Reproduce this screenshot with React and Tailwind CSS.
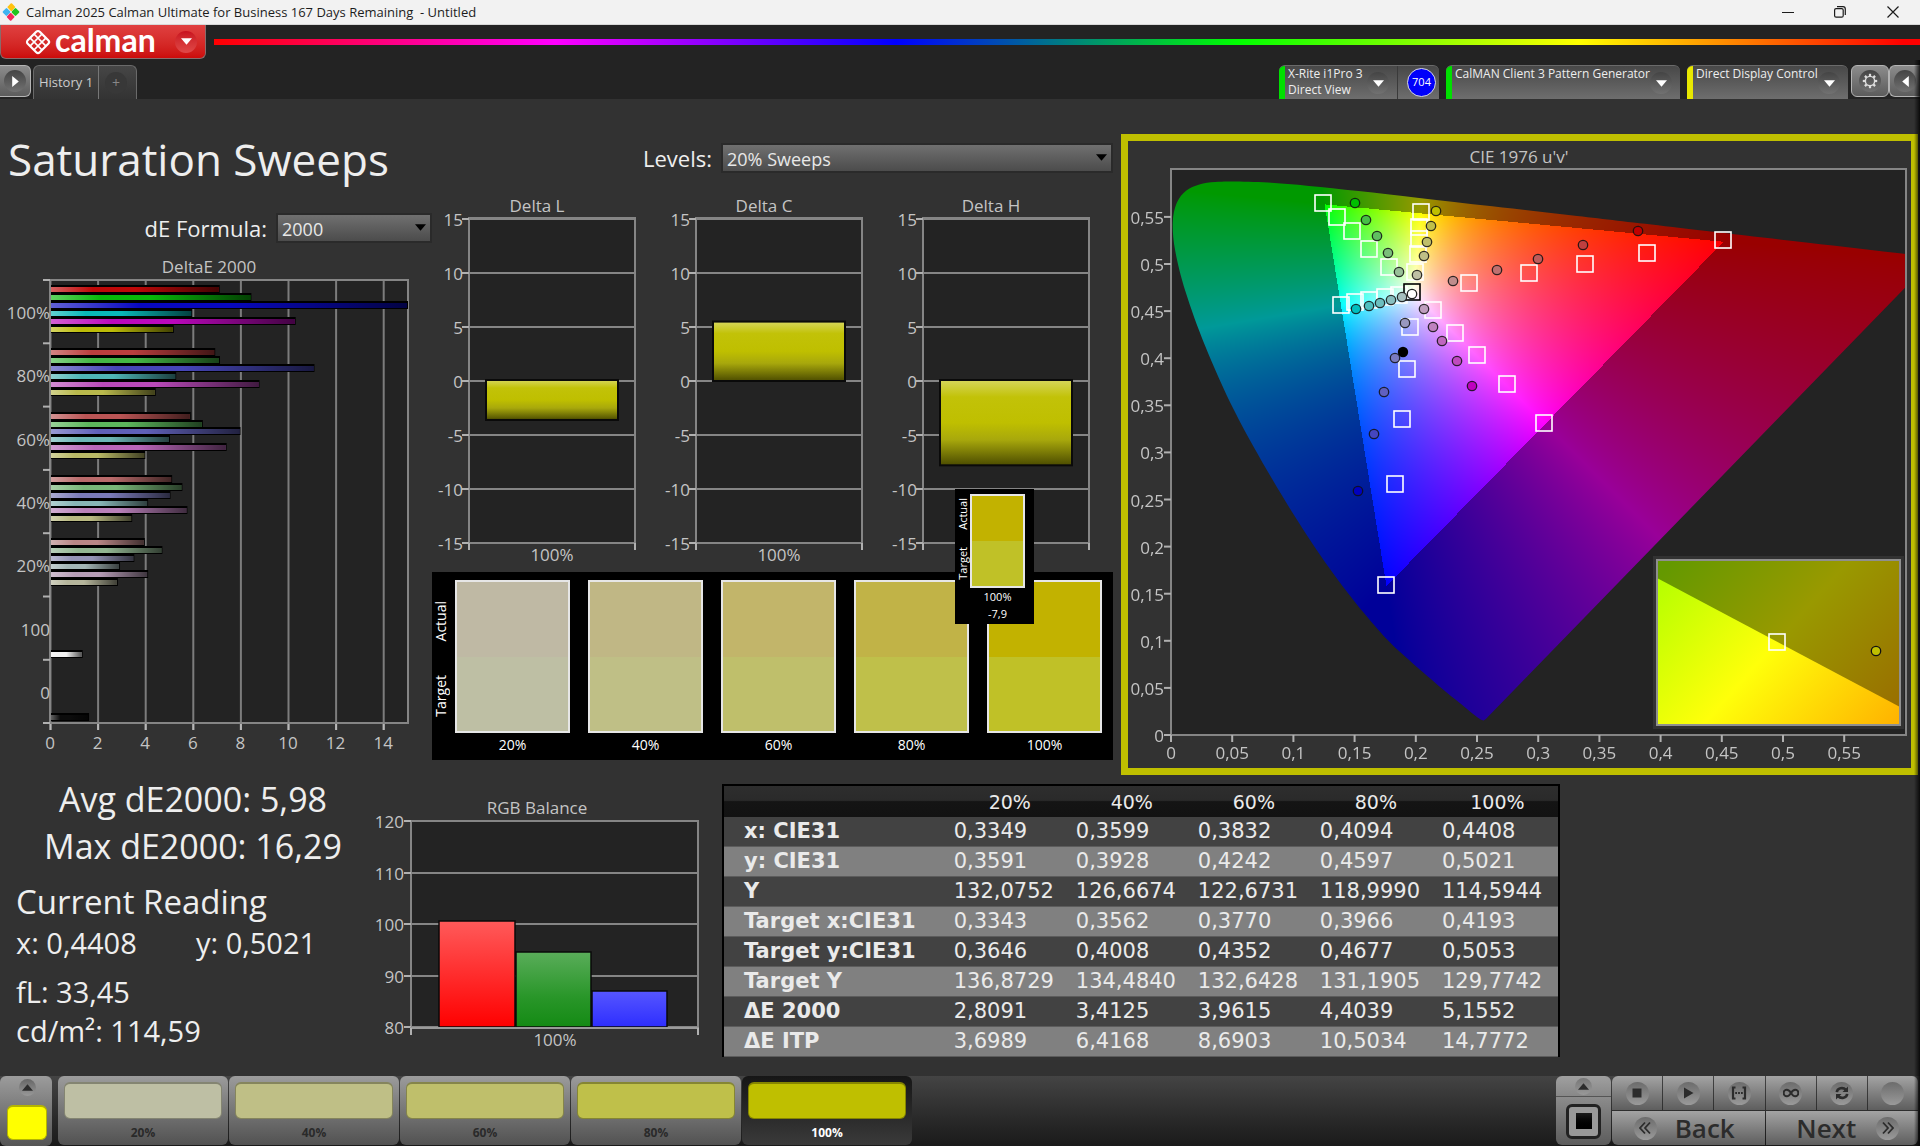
import React, { useEffect, useRef } from "react";

const LEVELS = ["20%", "40%", "60%", "80%", "100%"];

const SWATCHES = [
  { label: "20%", actual: "#bfb9a4", target: "#bebfa4" },
  { label: "40%", actual: "#c0b785", target: "#bfbf86" },
  { label: "60%", actual: "#c2b56a", target: "#bfbf6b" },
  { label: "80%", actual: "#c1b347", target: "#bfc04a" },
  { label: "100%", actual: "#c2b200", target: "#c0c127" },
];

const TABS = [
  { label: "20%", color: "#bebfa4" },
  { label: "40%", color: "#bfbf86" },
  { label: "60%", color: "#bfbf6b" },
  { label: "80%", color: "#bfc04a" },
  { label: "100%", color: "#bfbf00" },
];

const TABLE_ROWS = [
  ["x: CIE31", "0,3349", "0,3599", "0,3832", "0,4094", "0,4408"],
  ["y: CIE31", "0,3591", "0,3928", "0,4242", "0,4597", "0,5021"],
  ["Y", "132,0752", "126,6674", "122,6731", "118,9990", "114,5944"],
  ["Target x:CIE31", "0,3343", "0,3562", "0,3770", "0,3966", "0,4193"],
  ["Target y:CIE31", "0,3646", "0,4008", "0,4352", "0,4677", "0,5053"],
  ["Target Y", "136,8729", "134,4840", "132,6428", "131,1905", "129,7742"],
  ["ΔE 2000", "2,8091", "3,4125", "3,9615", "4,4039", "5,1552"],
  ["ΔE ITP", "3,6989", "6,4168", "8,6903", "10,5034", "14,7772"],
];

// one group per saturation level: red, green, blue, cyan, magenta, yellow
const DELTA_E = [
  { label: "100%", colors: ["#bf0808", "#08b808", "#0808bf", "#08b8b8", "#bc08bc", "#bcbc08"], values: [7.09, 8.42, 16.29, 5.93, 10.28, 5.16] },
  { label: "80%", colors: ["#bb3e3e", "#44b844", "#4646b8", "#4eb6b6", "#b94ab9", "#b9b94c"], values: [6.9, 7.1, 11.07, 5.26, 8.76, 4.4] },
  { label: "60%", colors: ["#b95454", "#5cb65c", "#6060b8", "#6cb6b6", "#b966b9", "#b9b966"], values: [5.87, 6.38, 7.96, 5.0, 7.38, 3.96] },
  { label: "40%", colors: ["#b96a6a", "#78b678", "#7a7ab8", "#88b6b6", "#b980b9", "#b9b982"], values: [5.09, 5.52, 5.02, 4.08, 5.73, 3.41] },
  { label: "20%", colors: ["#b98686", "#92b692", "#9494b6", "#a4b6b6", "#b69cb6", "#b6b69c"], values: [3.94, 4.68, 3.5, 2.9, 4.08, 2.81] },
  { label: "100", colors: ["#f2f2f2"], values: [1.33], last: true },
  { label: "0", colors: ["#0c0c0c"], values: [1.6], last: true },
];

const WHEEL = {
  red: ["#bf0000", "#bf3f3f", "#bf5b5b", "#bf7070", "#bf8c8c"],
  green: ["#00bf00", "#46bf46", "#60bf60", "#7abf7a", "#98bf98"],
  blue: ["#0000bf", "#4646bf", "#6060bf", "#7a7abf", "#9898bf"],
  cyan: ["#00bfbf", "#4ebfbf", "#6cbfbf", "#88bfbf", "#a6bfbf"],
  magenta: ["#bf00bf", "#bf4abf", "#bf66bf", "#bf82bf", "#bf9ebf"],
  yellow: ["#bfbf00", "#bfbf4a", "#bfbf6b", "#bfbf86", "#bfbfa4"],
};

// plot coordinates, measured from the top left of the CIE plot area
const TARGETS = [
  [152, 34], [166, 48], [181, 62], [198, 80], [218, 98],
  [250, 43], [248, 58], [248, 70], [247, 85], [244, 103],
  [170, 136], [184, 133], [198, 131], [214, 128], [228, 126],
  [239, 158], [236, 200], [231, 250], [224, 315], [215, 416],
  [262, 141], [284, 164], [306, 186], [336, 215], [373, 254],
  [298, 114], [358, 104], [414, 95], [476, 84], [552, 71],
];

const MEASURED = {
  green: [[184, 34], [195, 51], [206, 67], [217, 84], [228, 103]],
  yellow: [[265, 42], [260, 57], [256, 73], [253, 87], [246, 106]],
  red: [[467, 62], [412, 76], [367, 90], [326, 101], [282, 112]],
  magenta: [[301, 217], [286, 192], [271, 172], [262, 158], [253, 140]],
  blue: [[187, 322], [203, 265], [213, 223], [224, 189], [234, 154]],
  cyan: [[185, 140], [198, 137], [209, 134], [220, 131], [231, 128]],
};

// spectral locus in CIE 1931 xy
const LOCUS = [
  [0.1741, 0.005], [0.1714, 0.0051], [0.1644, 0.0109], [0.1566, 0.0177],
  [0.144, 0.0297], [0.1355, 0.0399], [0.1241, 0.0578], [0.1096, 0.0868],
  [0.0913, 0.1327], [0.0687, 0.2007], [0.0454, 0.295], [0.0235, 0.4127],
  [0.0082, 0.5384], [0.0039, 0.6548], [0.0139, 0.7502], [0.0389, 0.812],
  [0.0743, 0.8338], [0.1142, 0.8262], [0.1547, 0.8059], [0.2296, 0.7543],
  [0.3016, 0.6923], [0.3731, 0.6245], [0.4441, 0.5547], [0.5125, 0.4866],
  [0.5752, 0.4242], [0.627, 0.3725], [0.6915, 0.3083], [0.7347, 0.2653],
];

const PLOT_W = 735;
const PLOT_H = 566;

const tone = (v) => Math.pow(v, 1 / 1.2);

const colorAt = (u, v) => {
  const d = 6 * u - 16 * v + 12;
  const x = (9 * u) / d;
  const y = (4 * v) / d;
  const X = x / y;
  const Z = (1 - x - y) / y;
  let rgb = [
    3.2406 * X - 1.5372 - 0.4986 * Z,
    -0.9689 * X + 1.8758 + 0.0415 * Z,
    0.0557 * X - 0.204 + 1.057 * Z,
  ];
  const inside = Math.min(...rgb) >= 0;
  rgb = rgb.map((c) => Math.max(c, 0));
  const max = Math.max(...rgb);
  return rgb.map((c) => tone(c / max) * 255 * (inside ? 1 : 0.6));
};

const Gamut = () => {
  const ref = useRef(null);

  useEffect(() => {
    const ctx = ref.current.getContext("2d");
    const image = ctx.createImageData(PLOT_W, PLOT_H);
    for (let py = 0; py < PLOT_H; py++) {
      for (let px = 0; px < PLOT_W; px++) {
        const u = (px / PLOT_W) * 0.6;
        const v = ((PLOT_H - py - 0.5) / PLOT_H) * 0.6;
        const [r, g, b] = colorAt(u, v);
        const i = (py * PLOT_W + px) * 4;
        image.data[i] = r;
        image.data[i + 1] = g;
        image.data[i + 2] = b;
        image.data[i + 3] = 255;
      }
    }
    ctx.putImageData(image, 0, 0);

    // keep only what is inside the horseshoe
    const p = LOCUS.map(([x, y]) => {
      const d = -2 * x + 12 * y + 3;
      return [((4 * x) / d / 0.6) * PLOT_W, PLOT_H - ((9 * y) / d / 0.6) * PLOT_H];
    });
    ctx.globalCompositeOperation = "destination-in";
    ctx.beginPath();
    ctx.moveTo(p[0][0], p[0][1]);
    for (let i = 0; i < p.length - 1; i++) {
      const a = p[Math.max(i - 1, 0)];
      const b = p[i];
      const c = p[i + 1];
      const d = p[Math.min(i + 2, p.length - 1)];
      ctx.bezierCurveTo(
        b[0] + (c[0] - a[0]) / 6,
        b[1] + (c[1] - a[1]) / 6,
        c[0] - (d[0] - b[0]) / 6,
        c[1] - (d[1] - b[1]) / 6,
        c[0],
        c[1]
      );
    }
    ctx.closePath();
    ctx.fill();
  }, []);

  return <canvas ref={ref} width={PLOT_W} height={PLOT_H} className="block" />;
};

const Label = ({ x, y, anchor = "middle", children }) => (
  <text x={x} y={y} dy="6" textAnchor={anchor} className="fill-[#c4c4c4] text-[17px]">
    {children}
  </text>
);

const Target = ({ x, y, stroke = "#fff" }) => (
  <rect x={x - 8} y={y - 8} width="16" height="16" fill="none" stroke={stroke} strokeWidth="1.6" />
);

const CieChart = () => (
  <svg viewBox="0 0 783 627" className="block h-auto w-full">
    <defs>
      <linearGradient id="insetBright" gradientUnits="userSpaceOnUse" x1="21" y1="-6" x2="231" y2="181">
        <stop offset="0" stopColor="#b4ff00" />
        <stop offset="0.47" stopColor="#ffff0a" />
        <stop offset="1" stopColor="#ffb000" />
      </linearGradient>
      <linearGradient id="insetDark" gradientUnits="userSpaceOnUse" x1="21" y1="-6" x2="231" y2="181">
        <stop offset="0" stopColor="#649900" />
        <stop offset="0.47" stopColor="#999900" />
        <stop offset="1" stopColor="#996a00" />
      </linearGradient>
    </defs>
    <Label x={391} y={16}>CIE 1976 u'v'</Label>
    <rect x="43" y="28" width={PLOT_W} height={PLOT_H} fill="#232323" />
    <foreignObject x="43" y="28" width={PLOT_W} height={PLOT_H}>
      <Gamut />
    </foreignObject>
    <rect x="43" y="28" width={PLOT_W} height={PLOT_H} fill="none" stroke="#858585" strokeWidth="2" />

    {Array.from({ length: 12 }, (_, i) => {
      const text = String(Math.round(i * 5) / 100).replace(".", ",");
      const x = 43 + i * 61.2;
      const y = 594 - i * 47.1;
      return (
        <g key={i} stroke="none">
          <rect x={x - 1} y="594" width="2" height="7" fill="#b0b0b0" />
          <rect x="36" y={y - 1} width="7" height="2" fill="#b0b0b0" />
          <Label x={x} y={612}>{text}</Label>
          <Label x={36} y={y + 1} anchor="end">{text}</Label>
        </g>
      );
    })}

    <g transform="translate(43 28)">
      {TARGETS.map(([x, y], i) => (
        <Target key={i} x={x} y={y} />
      ))}
      <Target x={241} y={123} stroke="#000" />
      {Object.keys(MEASURED).map((name) =>
        MEASURED[name].map(([x, y], i) => (
          <circle key={name + i} cx={x} cy={y} r="4.7" fill={WHEEL[name][i]} stroke="#111" strokeOpacity="0.85" strokeWidth="1.3" />
        ))
      )}
      <circle cx="232" cy="183" r="5.2" fill="#000" />
      <circle cx="241" cy="125" r="4.7" fill="#fff" stroke="#222" strokeWidth="1.3" />
    </g>

    {/* zoomed view of the current patch */}
    <g transform="translate(529 419)">
      <rect x="-4" y="-4" width="251" height="173" fill="#323232" />
      <rect width="243" height="165" fill="url(#insetDark)" />
      <path d="M0 18L243 147V165H0Z" fill="url(#insetBright)" />
      <rect width="243" height="165" fill="none" stroke="#8f8f8f" strokeWidth="2" />
      <Target x={120} y={82} />
      <circle cx="219" cy="91" r="4.7" fill="#bfbf00" stroke="#111" strokeWidth="1.3" />
    </g>
  </svg>
);

const DeltaEChart = () => {
  const unit = 23.8;
  const group = 63.3;
  return (
    <svg viewBox="0 0 432 505" className="block h-auto w-full">
      <defs>
        <linearGradient id="shadeX">
          <stop offset="0" stopColor="#fff" stopOpacity="0.36" />
          <stop offset="0.25" stopColor="#fff" stopOpacity="0" />
          <stop offset="0.5" stopColor="#000" stopOpacity="0" />
          <stop offset="1" stopColor="#000" stopOpacity="0.65" />
        </linearGradient>
      </defs>
      <Label x={209} y={12}>DeltaE 2000</Label>
      <rect x="50" y="25" width="358" height="443" fill="#232323" />
      {[0, 2, 4, 6, 8, 10, 12, 14].map((n) => (
        <g key={n}>
          <rect x={49.5 + n * unit} y="25" width="2" height="450" fill="#7c7c7c" />
          <rect x={49.5 + n * unit} y="468" width="2" height="7" fill="#b8b8b8" />
          <Label x={50 + n * unit} y={488}>{n}</Label>
        </g>
      ))}
      <rect x="50" y="25" width="358" height="443" fill="none" stroke="#858585" strokeWidth="2" />
      {DELTA_E.map((g, gi) => {
        const top = 25 + gi * group;
        return (
          <g key={g.label}>
            <rect x="43" y={top - 1} width="7" height="2" fill="#b0b0b0" />
            <Label x={50} y={top + 33} anchor="end">{g.label}</Label>
            {g.values.map((value, i) => {
              const width = Math.min(value * unit, 357);
              const y = Math.round(top + (g.last ? 54 : 6) + i * 7.9);
              return (
                <g key={i}>
                  <rect x="51" y={y - 1} width={width} height="8" fill="#000" />
                  <rect x="51" y={y + 1} width={width - 1} height="5" fill={g.colors[i]} />
                  <rect x="51" y={y + 1} width={width - 1} height="5" fill="url(#shadeX)" />
                </g>
              );
            })}
          </g>
        );
      })}
      <rect x="43" y="467" width="7" height="2" fill="#b0b0b0" />
    </svg>
  );
};

const DeltaChart = ({ title, value }) => {
  const zero = 186;
  const height = Math.abs(value) * 10.8;
  const top = value > 0 ? zero - height : zero - 1;
  return (
    <svg viewBox="0 0 227 375" className="block h-auto w-full">
      <defs>
        <linearGradient id="shadeY" x1="0" y1="0" x2="0" y2="1">
          <stop offset="0" stopColor="#d6d65c" />
          <stop offset="0.2" stopColor="#c2c208" />
          <stop offset="0.5" stopColor="#bfbf00" />
          <stop offset="0.7" stopColor="#a8a80c" />
          <stop offset="1" stopColor="#4c4c00" />
        </linearGradient>
      </defs>
      <Label x={105} y={11}>{title}</Label>
      <rect x="37" y="23" width="166" height="325" fill="#232323" stroke="#858585" strokeWidth="2" />
      {[15, 10, 5, 0, -5, -10, -15].map((n, i) => (
        <g key={n}>
          <rect x="30" y={Math.round(23 + i * 54)} width="7" height="2" fill="#b0b0b0" />
          <rect x="37" y={Math.round(23 + i * 54)} width="166" height="2" fill="#858585" />
          <Label x={31} y={25 + i * 54} anchor="end">{n}</Label>
        </g>
      ))}
      <rect x="36" y="348" width="2" height="7" fill="#b0b0b0" />
      <rect x="202" y="348" width="2" height="7" fill="#b0b0b0" />
      <Label x={120} y={360}>100%</Label>
      <rect x="54" y={top} width="132" height={height} fill="url(#shadeY)" stroke="#0a0a0a" strokeWidth="2" />
    </svg>
  );
};

const RgbBalance = () => (
  <svg viewBox="0 0 340 265" className="block h-auto w-full">
    <defs>
      <linearGradient id="balanceR" x1="0" y1="0" x2="0" y2="1">
        <stop offset="0" stopColor="#ff5a5a" />
        <stop offset="1" stopColor="#ff0000" />
      </linearGradient>
      <linearGradient id="balanceG" x1="0" y1="0" x2="0" y2="1">
        <stop offset="0" stopColor="#5aad5a" />
        <stop offset="0.6" stopColor="#299629" />
        <stop offset="1" stopColor="#148a14" />
      </linearGradient>
      <linearGradient id="balanceB" x1="0" y1="0" x2="0" y2="1">
        <stop offset="0" stopColor="#5656ff" />
        <stop offset="1" stopColor="#2e2eff" />
      </linearGradient>
    </defs>
    <Label x={167} y={13}>RGB Balance</Label>
    <rect x="41" y="26" width="287" height="207" fill="#232323" stroke="#858585" strokeWidth="2" />
    {[120, 110, 100, 90, 80].map((n, i) => (
      <g key={n}>
        <rect x="34" y={Math.round(25 + i * 51.6)} width="7" height="2" fill="#b0b0b0" />
        <rect x="41" y={Math.round(25 + i * 51.6)} width="287" height="2" fill="#858585" />
        <Label x={34} y={27 + i * 51.6} anchor="end">{n}</Label>
      </g>
    ))}
    <rect x="69" y="126" width="76" height="106" fill="url(#balanceR)" stroke="#0a0a0a" strokeWidth="1.5" />
    <rect x="146" y="157" width="75" height="75" fill="url(#balanceG)" stroke="#0a0a0a" strokeWidth="1.5" />
    <rect x="222" y="196" width="75" height="36" fill="url(#balanceB)" stroke="#0a0a0a" strokeWidth="1.5" />
    <rect x="40" y="232" width="289" height="2" fill="#9a9a9a" />
    <rect x="40" y="233" width="2" height="7" fill="#b0b0b0" />
    <rect x="327" y="233" width="2" height="7" fill="#b0b0b0" />
    <Label x={185} y={245}>100%</Label>
  </svg>
);

const Caret = ({ dir = "down", className = "" }) => {
  const d = {
    down: "M0 2H10L5 8Z",
    up: "M0 8H10L5 2Z",
    right: "M2 0V10L8 5Z",
    left: "M8 0V10L2 5Z",
  }[dir];
  return (
    <svg viewBox="0 0 10 10" className={"h-[11px] w-[11px] " + className}>
      <path d={d} fill="currentColor" />
    </svg>
  );
};

const Select = ({ id, value, className }) => (
  <div className={"relative h-[30px] " + className}>
    <select
      id={id}
      defaultValue={value}
      className="block h-full w-full appearance-none border-2 border-[#2a2a2a] bg-linear-to-b from-[#707070] to-[#4c4c4c] pt-[2px] pl-1 text-[18px] leading-[24px] text-[#e8e8e8]"
    >
      <option>{value}</option>
    </select>
    <Caret className="pointer-events-none absolute top-[9px] right-[6px] text-black" />
  </div>
);

const Swatch = ({ item }) => (
  <div className="flex flex-1 flex-col border-2 border-[#e6e6e6]">
    <div className="flex-1" style={{ backgroundColor: item.actual }} />
    <div className="flex-1" style={{ backgroundColor: item.target }} />
  </div>
);

const Vertical = ({ children }) => (
  <span className="rotate-180 [writing-mode:vertical-rl]">{children}</span>
);

const SwatchPanel = () => (
  <div className="flex h-[188px] bg-black pt-2 pr-[11px] text-[14px] text-white">
    <div className="flex h-[153px] w-[23px] flex-col items-start justify-around pt-[5px] text-[14px] leading-[18px]">
      <Vertical>Actual</Vertical>
      <Vertical>Target</Vertical>
    </div>
    <div className="grid flex-1 grid-cols-5 gap-[18px]">
      {SWATCHES.map((item) => (
        <div key={item.label} className="flex flex-col">
          <Swatch item={item} />
          <div className="h-[27px] text-center leading-[24px]">{item.label}</div>
        </div>
      ))}
    </div>
  </div>
);

const PatchTooltip = () => (
  <div className="absolute top-[294px] left-[523px] z-10 flex h-[135px] w-[79px] bg-black text-[11px] text-white">
    <div className="flex h-[100px] w-[15px] flex-col items-center justify-around text-[11px] leading-[15px]">
      <Vertical>Actual</Vertical>
      <Vertical>Target</Vertical>
    </div>
    <div className="flex w-[55px] flex-col pt-[5px] text-center">
      <div className="flex h-[94px] flex-none">
        <Swatch item={SWATCHES[4]} />
      </div>
      <div className="leading-[17px]">100%</div>
      <div className="leading-[17px]">-7,9</div>
    </div>
  </div>
);

const TitleBar = () => (
  <div className="flex h-[25px] items-center border-b border-[#d8d8d8] bg-[#f2f2f2] pl-[2px] text-[#1c1c1c]">
    <svg viewBox="0 0 18 18" className="h-[18px] w-[18px]">
      <rect x="6" y="1" width="6" height="6" rx="1" transform="rotate(45 9 4.5)" fill="#ffc20e" />
      <rect x="1.5" y="6" width="6" height="6" rx="1" transform="rotate(45 4.5 9)" fill="#3fb4f0" />
      <rect x="10.5" y="6" width="6" height="6" rx="1" transform="rotate(45 13.5 9)" fill="#1fc41f" />
      <rect x="6" y="11" width="6" height="6" rx="1" transform="rotate(45 9 13.5)" fill="#f2295b" />
    </svg>
    <span className="ml-[6px] pt-[2px] text-[13px] whitespace-pre">
      Calman 2025 Calman Ultimate for Business 167 Days Remaining{"  "}- Untitled
    </span>
    <div className="ml-auto flex">
      <button aria-label="Minimize" className="flex h-[24px] w-[52px] items-center justify-center">
        <svg viewBox="0 0 12 12" className="h-3 w-3" stroke="currentColor">
          <path d="M0 6.500H12" />
        </svg>
      </button>
      <button aria-label="Restore" className="flex h-[24px] w-[52px] items-center justify-center">
        <svg viewBox="0 0 12 12" className="h-3 w-3" fill="none" stroke="currentColor" strokeWidth="1.2">
          <rect x="0.6" y="2.600" width="8.600" height="8.600" rx="1.500" />
          <path d="M3 0.700H9A2.300 2.300 0 0 1 11.300 3V9" />
        </svg>
      </button>
      <button aria-label="Close" className="flex h-[24px] w-[54px] items-center justify-center">
        <svg viewBox="0 0 12 12" className="h-3 w-3" stroke="currentColor" strokeWidth="1.2">
          <path d="M0.500 0.500L11.500 11.500M11.500 0.500L0.500 11.500" />
        </svg>
      </button>
    </div>
  </div>
);

const LogoMark = () => (
  <svg viewBox="0 0 26 26" className="h-[26px] w-[26px] flex-none" fill="none" stroke="#fff">
    <g transform="rotate(45 13 13)">
      <rect x="4.5" y="4.5" width="17" height="17" rx="2.500" strokeWidth="2.200" />
      <path d="M10.200 4.500V21.500M15.800 4.500V21.500M4.500 10.200H21.500M4.500 15.800H21.500" strokeWidth="1.700" />
    </g>
  </svg>
);

const Round = ({ className = "", children }) => (
  <span
    className={
      "flex h-[22px] w-[22px] flex-none items-center justify-center rounded-full bg-linear-to-b from-[#444] to-[#727272] text-white " +
      className
    }
  >
    {children}
  </span>
);

const Device = ({ lines, bar, children, className }) => (
  <div
    className={
      "flex h-[34px] overflow-hidden rounded-t-md border-t border-[#6a6a6a] bg-linear-to-b from-[#484848] to-[#6e6e6e] " +
      className
    }
  >
    <button className="flex flex-1 text-left text-[12px] leading-[16px] text-[#eee]">
      <span className={"mr-[3px] h-full w-[6px] flex-none " + bar} />
      <span className="flex-1 whitespace-nowrap">
        {lines.map((line) => (
          <span key={line} className="block">
            {line}
          </span>
        ))}
      </span>
      <Round className="mt-[6px] mr-2">
        <Caret />
      </Round>
    </button>
    {children}
  </div>
);

const SQUARE_BTN =
  "flex h-[32px] items-center justify-center rounded-md border border-[#b4b4b4] bg-linear-to-b from-[#8c8c8c] to-[#5c5c5c]";

const Gear = () => (
  <svg viewBox="0 0 20 20" className="h-[16px] w-[16px]" fill="none" stroke="#ddd">
    <circle cx="10" cy="10" r="5.800" strokeWidth="1.800" />
    {[0, 45, 90, 135, 180, 225, 270, 315].map((a) => (
      <path key={a} d="M10 1V4" strokeWidth="2.800" transform={`rotate(${a} 10 10)`} />
    ))}
  </svg>
);

const Header = () => (
  <header className="bg-[#232323]">
    <div className="flex h-[40px] items-start">
      <button
        aria-label="Calman menu"
        className="flex h-[34px] w-[206px] items-center rounded-b-md border border-t-0 border-[#8a6a6a] bg-linear-to-b from-[#e04040] to-[#cc0a0a] pr-2 pl-[24px] text-white"
      >
        <LogoMark />
        <span className="ml-1 pb-1 font-[Lato] text-[32px] leading-[30px] font-bold">calman</span>
        <span className="ml-auto flex h-[22px] w-[22px] items-center justify-center rounded-full bg-linear-to-b from-[#c80f1e] to-[#e04848]">
          <Caret />
        </span>
      </button>
      <div className="mt-[14px] ml-2 h-[6px] flex-1 bg-[linear-gradient(90deg,#f00,#f0f_20%,#00f_40%,#0f0_60%,#ff0_80%,#f00_99%)]" />
    </div>
    <div className="flex h-[34px]">
      <button aria-label="Show panel" className={SQUARE_BTN + " w-[31px] rounded-l-none border-l-0"}>
        <Round>
          <Caret dir="right" />
        </Round>
      </button>
      <div className="ml-[2px] flex rounded-t-md border border-b-0 border-[#6a6a6a] bg-linear-to-b from-[#464646] to-[#333]">
        <button className="w-[65px] border-r border-[#777] text-[13px] text-[#ccc]">History 1</button>
        <button aria-label="Add history" className="flex w-[37px] items-center justify-center">
          <span className="mr-[3px] h-[22px] w-[22px] rounded-full bg-[#383838] text-[14px] leading-[22px] text-[#888]">+</span>
        </button>
      </div>
      <div className="ml-auto flex">
        <Device lines={["X-Rite i1Pro 3", "Direct View"]} bar="bg-[#00e000]" className="w-[160px]">
          <div className="flex w-[42px] items-center justify-end border-l border-[#3a3a3a] pr-[3px]">
            <span className="flex h-[29px] w-[29px] items-center justify-center rounded-full border border-[#ddd] bg-[#0000fa] text-[11px] text-white">
              704
            </span>
          </div>
        </Device>
        <Device lines={["CalMAN Client 3 Pattern Generator"]} bar="bg-[#00e000]" className="ml-[7px] w-[234px]" />
        <Device lines={["Direct Display Control"]} bar="bg-[#e8e800]" className="ml-[7px] w-[161px]" />
        <button aria-label="Settings" className={SQUARE_BTN + " ml-[3px] w-[38px]"}>
          <Round>
            <Gear />
          </Round>
        </button>
        <button aria-label="Hide panel" className={SQUARE_BTN + " w-[31px] rounded-r-none border-r-0"}>
          <Round>
            <Caret dir="left" />
          </Round>
        </button>
      </div>
    </div>
  </header>
);

const ResultsTable = () => (
  <table className="mt-[9px] w-full table-fixed border-collapse border-x-2 border-t-2 border-black text-left font-['DejaVu_Sans'] text-[21px] text-[#eaeaea]">
    <thead>
      <tr className="h-[32px] bg-[linear-gradient(#2e2e2e,#2a2a2a_48%,#141414_52%,#121212)]">
        <th className="w-[27%]" aria-label="Value" />
        {LEVELS.map((level) => (
          <th key={level} className="text-center text-[19px] leading-[28px] font-normal">
            {level}
          </th>
        ))}
      </tr>
    </thead>
    <tbody>
      {TABLE_ROWS.map(([name, ...cells]) => (
        <tr key={name} className="border-b border-[#5c5c5c] odd:bg-[#424242] even:bg-[#808080]">
          <th className="pl-[20px] text-[21px] leading-[29px] font-bold whitespace-nowrap">{name}</th>
          {cells.map((cell, i) => (
            <td key={i} className="pl-[5px] leading-[29px]">
              {cell}
            </td>
          ))}
        </tr>
      ))}
    </tbody>
  </table>
);

const PAD = "flex items-center justify-center bg-linear-to-b from-[#a4a4a4] to-[#5e5e5e] text-[#2c2c2c]";
const DISC = "flex h-[23px] w-[23px] items-center justify-center rounded-full bg-linear-to-b from-[#6c6c6c] to-[#9a9a9a]";

const TRANSPORT = [
  { name: "Stop", icon: <rect x="3.500" y="3.500" width="9" height="9" fill="currentColor" /> },
  { name: "Play", icon: <path d="M4 2.500V13.500L13.500 8Z" fill="currentColor" /> },
  {
    name: "Read range",
    icon: (
      <g fill="none" stroke="currentColor" strokeWidth="2.200">
        <path d="M4.500 2.500H2V13.500H4.500M11.500 2.500H14V13.500H11.500" />
        <path d="M4.200 8H11.800" strokeDasharray="1.800 1.100" />
      </g>
    ),
  },
  {
    name: "Continuous",
    icon: (
      <path
        d="M8 8C6.500 5.500 5.300 4.800 3.800 4.800A3.200 3.200 0 0 0 3.800 11.200C5.300 11.200 6.500 10.500 8 8C9.500 5.500 10.700 4.800 12.200 4.800A3.200 3.200 0 0 1 12.200 11.200C10.700 11.200 9.500 10.500 8 8Z"
        fill="none"
        stroke="currentColor"
        strokeWidth="2"
      />
    ),
  },
  {
    name: "Refresh",
    icon: (
      <g fill="none" stroke="currentColor" strokeWidth="2.600">
        <path d="M2.800 7.200C3.200 3 9 1.800 12 5M13.200 8.800C12.800 13 7 14.200 4 11" />
        <path d="M14 1.500V7H8.500ZM2 14.500V9H7.500Z" fill="currentColor" stroke="none" />
      </g>
    ),
  },
  { name: "Record", icon: null },
];

const Footer = () => (
  <footer className="flex h-[70px] bg-linear-to-b from-[#444] to-[#1a1a1a]">
    <button
      aria-label="Current patch"
      className="flex w-[52px] flex-col items-center rounded-md bg-linear-to-b from-[#9c9c9c] to-[#555] pl-[2px]"
    >
      <span className="mt-[3px] flex h-[17px] w-[17px] items-center justify-center rounded-full bg-linear-to-b from-[#666] to-[#999] text-[#2c2c2c]">
        <Caret dir="up" />
      </span>
      <span className="mt-[9px] h-[35px] w-[40px] rounded-md border border-t-2 border-[#b4b400] bg-[#ffff00]" />
    </button>
    <div className="ml-[6px] flex gap-px">
      {TABS.map((tab, i) => {
        const active = i === 4;
        return (
          <button
            key={tab.label}
            className={
              "flex h-[69px] w-[170px] flex-col rounded-md px-[6px] pt-[6px] " +
              (active
                ? "bg-linear-to-b from-[#161616] to-[#3a3a3a] text-white"
                : "bg-linear-to-b from-[#9c9c9c] to-[#525252] text-[#2a2a2a]")
            }
          >
            <span
              className="h-[41px] w-full rounded-md border border-t-2 border-black/30"
              style={{ backgroundColor: tab.color }}
            />
            <span className="w-full pt-[2px] text-[12px] leading-[24px] font-bold">{tab.label}</span>
          </button>
        );
      })}
    </div>

    <div className="mr-[2px] ml-auto flex h-[69px]">
      <div className="flex w-[55px] flex-col">
        <button aria-label="Show layouts" className="flex h-[21px] items-center justify-center rounded-t-md border-b border-[#555] bg-linear-to-b from-[#a0a0a0] to-[#888]">
          <span className="flex h-[17px] w-[17px] items-center justify-center rounded-full bg-linear-to-b from-[#777] to-[#999] text-[#2c2c2c]">
            <Caret dir="up" />
          </span>
        </button>
        <button aria-label="Pattern window" className="flex flex-1 items-center justify-center rounded-b-md bg-linear-to-b from-[#8c8c8c] to-[#5c5c5c]">
          <span className="flex h-[35px] w-[35px] items-center justify-center rounded-md border-[3px] border-[#222] bg-[#999]">
            <span className="h-4 w-4 bg-linear-to-b from-[#1c1c1c] to-black" />
          </span>
        </button>
      </div>
      <div className="ml-px flex w-[306px] flex-col gap-px overflow-hidden rounded-md">
        <div className="grid h-[34px] grid-cols-6 gap-px">
          {TRANSPORT.map((item) => (
            <button key={item.name} aria-label={item.name} className={PAD}>
              <span className={DISC}>
                <svg viewBox="0 0 16 16" className="h-4 w-4">
                  {item.icon}
                </svg>
              </span>
            </button>
          ))}
        </div>
        <div className="grid h-[34px] grid-cols-2 gap-px text-[26px] leading-[32px] font-semibold">
          <button className={PAD + " gap-[18px] pr-2"}>
            <span className={DISC}>
              <svg viewBox="0 0 16 16" className="h-4 w-4" fill="none" stroke="currentColor" strokeWidth="1.800">
                <path d="M8 2.500L3 8L8 13.500M13 2.500L8 8L13 13.500" />
              </svg>
            </span>
            Back
          </button>
          <button className={PAD + " gap-[20px] pl-3"}>
            Next
            <span className={DISC}>
              <svg viewBox="0 0 16 16" className="h-4 w-4" fill="none" stroke="currentColor" strokeWidth="1.800">
                <path d="M3 2.500L8 8L3 13.500M8 2.500L13 8L8 13.500" />
              </svg>
            </span>
          </button>
        </div>
      </div>
    </div>
  </footer>
);

const App = () => {
  return (
    <div className="relative flex min-h-screen flex-col overflow-hidden bg-[#323232] font-['Open_Sans',sans-serif] text-[#eee]">
      <TitleBar />
      <Header />

      <main className="flex-1">
        <div className="grid grid-cols-[432fr_681fr_807fr] items-start">
          <section className="pt-8">
            <h1 className="pl-2 text-[44px] leading-[56px] whitespace-nowrap">Saturation Sweeps</h1>
            <div className="mt-[26px] mb-3 flex items-center justify-end">
              <label htmlFor="formula" className="mr-[9px] text-[22px] leading-[30px]">
                dE Formula:
              </label>
              <Select id="formula" value="2000" className="w-[156px]" />
            </div>
            <DeltaEChart />
          </section>

          <section className="pt-[44px]">
            <div className="mb-[22px] flex items-center pl-[211px]">
              <label htmlFor="levels" className="mr-[9px] text-[22px] leading-[30px]">
                Levels:
              </label>
              <Select id="levels" value="20% Sweeps" className="flex-1" />
            </div>
            <div className="relative">
              <div className="mb-[2px] grid grid-cols-3">
                <DeltaChart title="Delta L" value={-3.7} />
                <DeltaChart title="Delta C" value={5.5} />
                <DeltaChart title="Delta H" value={-7.9} />
              </div>
              <SwatchPanel />
              <PatchTooltip />
            </div>
          </section>

          <section className="mt-[35px] mr-[2px] ml-2 border-[7px] border-[#bfbf00]">
            <CieChart />
          </section>
        </div>

        <div className="grid grid-cols-[370fr_340fr_12fr_838fr_360fr] items-start">
          <section className="pt-px pl-4 text-[29px]">
            <p className="text-center text-[34px] leading-[47px]">Avg dE2000: 5,98</p>
            <p className="text-center text-[34px] leading-[47px]">Max dE2000: 16,29</p>
            <h2 className="mt-2 text-[33px] leading-[47px]">Current Reading</h2>
            <div className="flex leading-[36px]">
              <p className="w-[180px]">x: 0,4408</p>
              <p>y: 0,5021</p>
            </div>
            <p className="mt-[11px] leading-[39px]">fL: 33,45</p>
            <p className="leading-[39px]">cd/m²: 114,59</p>
          </section>
          <div className="pt-5">
            <RgbBalance />
          </div>
          <div className="col-start-4">
            <ResultsTable />
          </div>
        </div>
      </main>

      <Footer />

      {/* window edge shadow */}
      <div className="pointer-events-none absolute top-[60px] right-0 bottom-0 w-[6px] bg-linear-to-r from-transparent to-black/80" />
    </div>
  );
};

export default App;
